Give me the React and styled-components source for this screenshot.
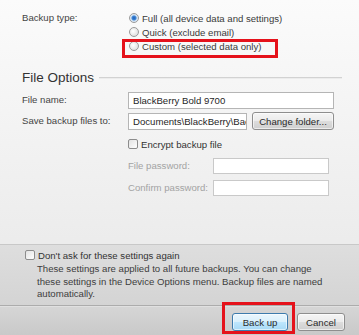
import styled, { createGlobalStyle } from 'styled-components';

const GlobalStyle = createGlobalStyle`
  html, body { margin: 0; padding: 0; }
  body { background: #f4f4f4; }
  *, *::before, *::after { box-sizing: border-box; }
`;

const Page = styled.div`
  position: relative;
  width: 359px;
  height: 335px;
  overflow: hidden;
  display: flex;
  flex-direction: column;
  background: linear-gradient(#fbfbfb, #ececec 240px);
  font-family: 'Liberation Sans', Arial, sans-serif;
  font-size: 9.6px;
  color: #3a3a3a;
`;

const TypeSection = styled.div`
  display: grid;
  grid-template-columns: 107px 1fr;
  padding: 11px 0 0 22px;
`;

const Label = styled.div`
  height: ${({ $h }) => $h || 14}px;
  line-height: ${({ $h }) => $h || 14}px;
  color: ${({ $muted }) => ($muted ? '#a3a3a3' : '#444')};
  white-space: nowrap;
`;

const RadioList = styled.div`
  display: flex;
  flex-direction: column;
`;

const Choice = styled.label`
  position: relative;
  height: 14px;
  display: flex;
  align-items: center;
  gap: 3px;
  color: #3a3a3a;
  white-space: nowrap;
`;

const Radio = styled.span`
  width: 10px;
  height: 10px;
  border-radius: 50%;
  border: 1px solid #9a9a9a;
  background: ${({ $on }) =>
    $on
      ? 'radial-gradient(circle, #1d5fb8 0, #3f86d6 2px, #cfe0f2 3px, #eef2f6 5px)'
      : 'radial-gradient(circle at 40% 40%, #ffffff, #d6d6d6)'};
  flex: none;
`;

const Highlight = styled.span`
  position: absolute;
  left: ${({ $l }) => $l}px;
  top: ${({ $t }) => $t}px;
  width: ${({ $w }) => $w}px;
  height: ${({ $h }) => $h}px;
  border: 3px solid #e5121b;
  pointer-events: none;
`;

const Heading = styled.div`
  display: flex;
  align-items: center;
  margin: 16px 17px 0 22px;
  height: 16px;
  font-size: 13.5px;
  color: #333;
  &::after {
    content: '';
    flex: 1;
    margin-left: 5px;
    margin-top: 2px;
    border-top: 1px solid #d2d2d2;
    border-bottom: 1px solid #ececec;
  }
`;

const Form = styled.div`
  display: grid;
  grid-template-columns: 106px 1fr;
  row-gap: 3px;
  align-items: center;
  padding: 6px 0 0 22px;
`;

const Field = styled.div`
  display: flex;
  align-items: center;
  gap: 5px;
`;

const TextBox = styled.div`
  width: ${({ $w }) => $w}px;
  height: ${({ $h }) => $h || 17}px;
  line-height: ${({ $h }) => ($h || 17) - 2}px;
  padding: 0 4px;
  border: 1px solid ${({ $muted }) => ($muted ? '#c9c9c9' : '#b5b5b5')};
  background: #fff;
  color: #1f1f1f;
  white-space: nowrap;
  overflow: hidden;
`;

const Button = styled.button`
  display: block;
  width: ${({ $w }) => $w}px;
  height: 18px;
  padding: 0;
  font: inherit;
  color: #2a2a2a;
  border-radius: 3px;
  border: 1px solid ${({ $primary }) => ($primary ? '#3d7bad' : '#8e8e8e')};
  background: ${({ $primary }) =>
    $primary
      ? 'linear-gradient(#eaf6fd, #d9f0fc 50%, #bee6fd 51%, #a7d9f5)'
      : 'linear-gradient(#f5f5f5, #ebebeb 50%, #dddddd 51%, #cfcfcf)'};
  box-shadow: inset 0 0 0 1px rgba(255, 255, 255, 0.6);
`;

const Encrypt = styled.div`
  margin: 7px 0 0 128px;
`;

const CheckRow = styled.label`
  display: flex;
  align-items: center;
  gap: 3px;
  height: 14px;
  color: #333;
  white-space: nowrap;
`;

const Box = styled.span`
  width: 10px;
  height: 10px;
  flex: none;
  border: 1px solid #8c8c8c;
  border-radius: 2px;
  background: linear-gradient(135deg, #e2e2e2, #ffffff);
`;

const PasswordGrid = styled.div`
  display: grid;
  grid-template-columns: 85px 116px;
  row-gap: 6px;
  align-items: center;
  margin-top: 7px;
`;

const Panel = styled.div`
  margin-top: auto;
  height: 61px;
  border-top: 1px solid #c8c8c8;
  background: linear-gradient(#dedede, #d4d4d4);
  padding: 3px 0 0 25px;
`;

const Note = styled.p`
  margin: 1px 0 0 12px;
  width: 300px;
  line-height: 12.5px;
  color: #3d3d3d;
`;

const Footer = styled.div`
  height: 30px;
  border-top: 1px solid #acacac;
  box-shadow: inset 0 1px 0 #e0e0e0;
  background: linear-gradient(#d6d6d6, #c9c9c9);
  display: flex;
  justify-content: flex-end;
  align-items: flex-start;
  gap: 9px;
  padding: 7px 14px 0 0;
`;

const ButtonWrap = styled.div`
  position: relative;
`;

export default function App() {
  return (
    <Page>
      <GlobalStyle />
      <TypeSection>
        <Label>Backup type:</Label>
        <RadioList>
          <Choice>
            <Radio $on />
            Full (all device data and settings)
          </Choice>
          <Choice>
            <Radio />
            Quick (exclude email)
          </Choice>
          <Choice>
            <Radio />
            Custom (selected data only)
            <Highlight $l={-7} $t={0} $w={156} $h={19} />
          </Choice>
        </RadioList>
      </TypeSection>

      <Heading>File Options</Heading>

      <Form>
        <Label $h={18}>File name:</Label>
        <TextBox $w={206}>BlackBerry Bold 9700</TextBox>
        <Label $h={18}>Save backup files to:</Label>
        <Field>
          <TextBox $w={119}>{'Documents\\BlackBerry\\Backup'}</TextBox>
          <Button $w={82}>Change folder...</Button>
        </Field>
      </Form>

      <Encrypt>
        <CheckRow>
          <Box />
          Encrypt backup file
        </CheckRow>
        <PasswordGrid>
          <Label $muted $h={16}>File password:</Label>
          <TextBox $w={116} $h={16} $muted />
          <Label $muted $h={16}>Confirm password:</Label>
          <TextBox $w={116} $h={16} $muted />
        </PasswordGrid>
      </Encrypt>

      <Panel>
        <CheckRow>
          <Box />
          Don&apos;t ask for these settings again
        </CheckRow>
        <Note>
          These settings are applied to all future backups. You can change
          these settings in the Device Options menu. Backup files are named
          automatically.
        </Note>
      </Panel>

      <Footer>
        <ButtonWrap>
          <Button $w={56} $primary>Back up</Button>
          <Highlight $l={-10} $t={-11} $w={73} $h={32} />
        </ButtonWrap>
        <Button $w={48}>Cancel</Button>
      </Footer>
    </Page>
  );
}
